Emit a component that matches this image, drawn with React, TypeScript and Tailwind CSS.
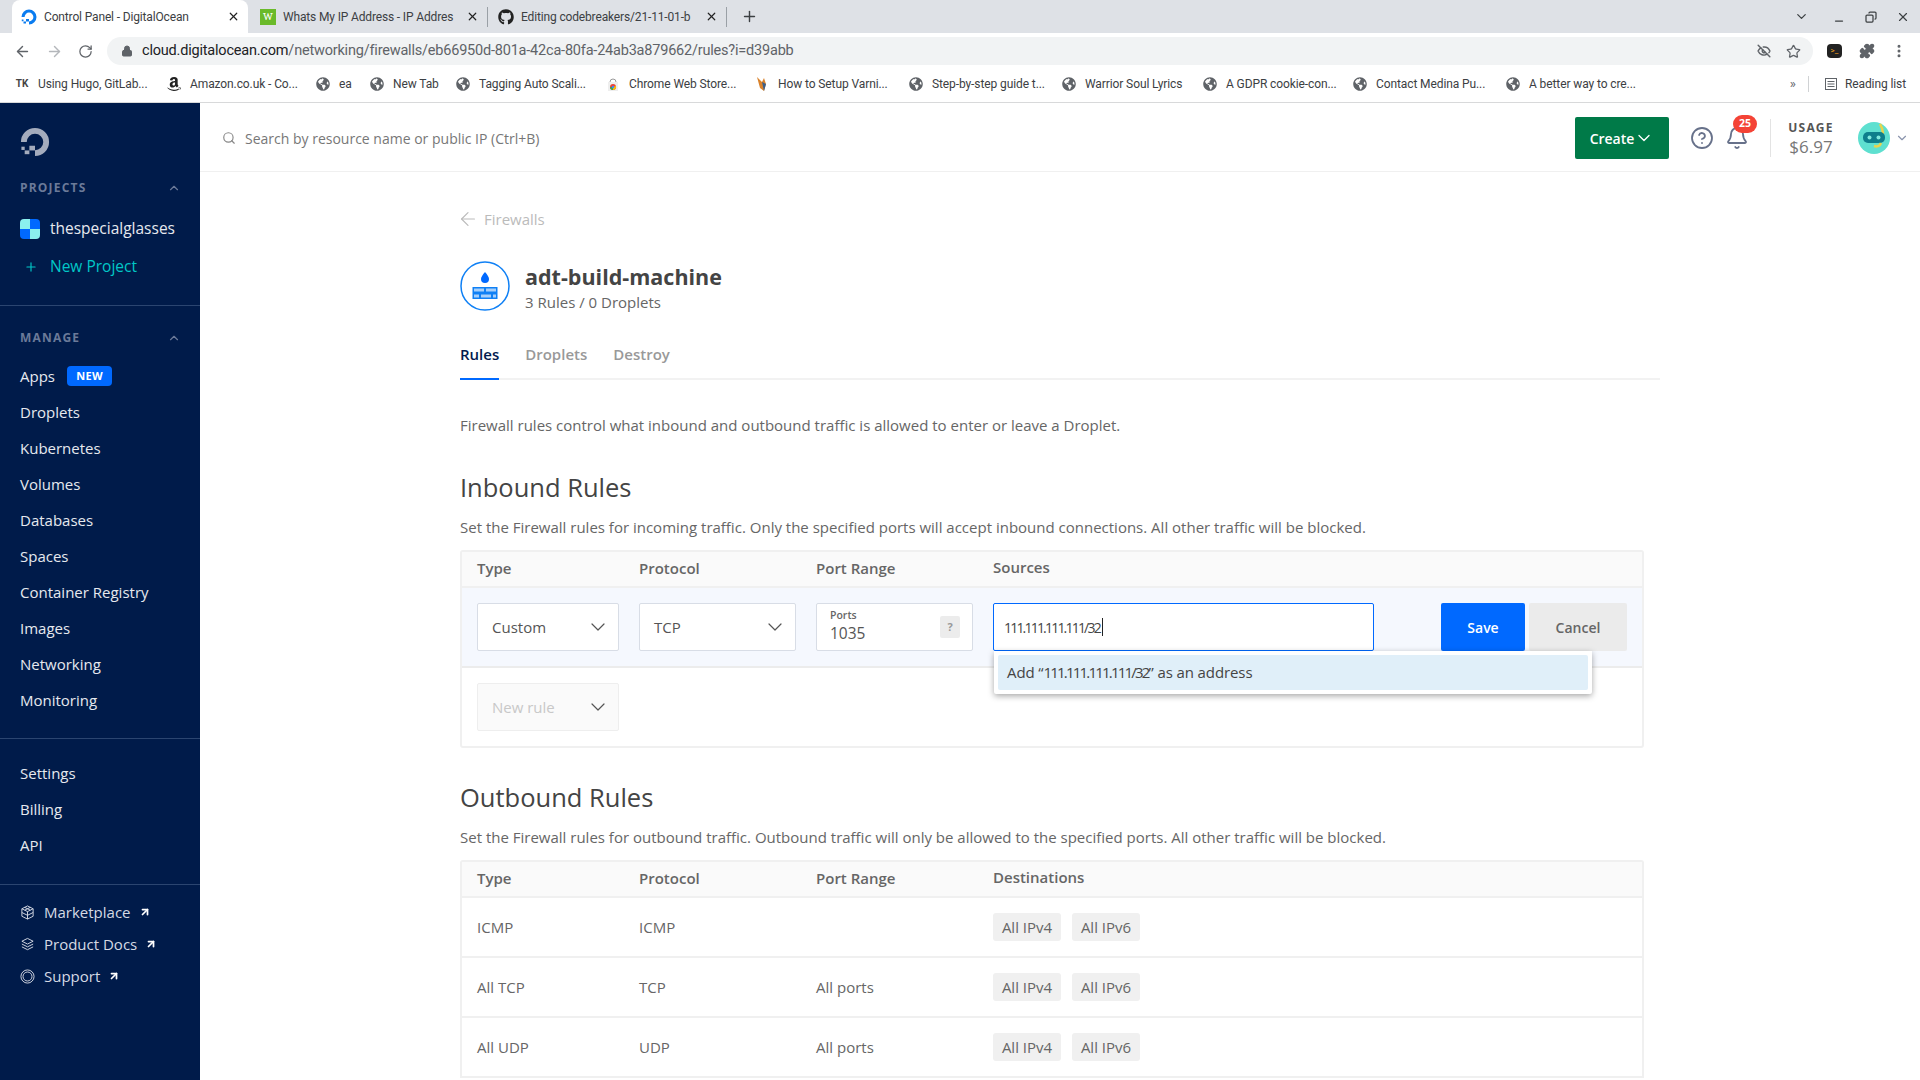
import { ArrowLeft, ArrowRight, ChevronDown, ChevronUp, EllipsisVertical, EyeOff, Lock, Plus, Puzzle, RotateCw, Search, Star, X, Minus, ArrowUpRight, CircleHelp, Bell, Copy } from "lucide-react";
import { FaGithub, FaGlobeAmericas, FaAmazon } from "react-icons/fa";

const bookmarks = [
    { label: "Using Hugo, GitLab...", icon: "tk", width: "w-[152px]" },
    { label: "Amazon.co.uk - Co...", icon: "amazon", width: "w-[149px]" },
    { label: "ea", icon: "globe", width: "w-[54px]" },
    { label: "New Tab", icon: "globe", width: "w-[86px]" },
    { label: "Tagging Auto Scali...", icon: "globe", width: "w-[150px]" },
    { label: "Chrome Web Store...", icon: "chrome", width: "w-[149px]" },
    { label: "How to Setup Varni...", icon: "fox", width: "w-[154px]" },
    { label: "Step-by-step guide t...", icon: "globe", width: "w-[153px]" },
    { label: "Warrior Soul Lyrics", icon: "globe", width: "w-[141px]" },
    { label: "A GDPR cookie-con...", icon: "globe", width: "w-[150px]" },
    { label: "Contact Medina Pu...", icon: "globe", width: "w-[153px]" },
    { label: "A better way to cre...", icon: "globe", width: "w-[140px]" },
];

const manage = ["Droplets", "Kubernetes", "Volumes", "Databases", "Spaces", "Container Registry", "Images", "Networking", "Monitoring"];

const outbound = [
    { type: "ICMP", protocol: "ICMP", ports: "" },
    { type: "All TCP", protocol: "TCP", ports: "All ports" },
    { type: "All UDP", protocol: "UDP", ports: "All ports" },
];

const DoLogo = ({ className }: { className: string }) => (
    <svg viewBox="0 0 32 32" className={className} fill="currentColor">
        <path d="M16 31v-6.2a8.8 8.8 0 1 0-8.8-8.8H1A15 15 0 1 1 16 31z" />
        <rect x="10" y="20" width="6" height="5" />
        <rect x="5" y="25" width="5" height="4" />
        <rect x="1.5" y="21" width="3.5" height="3.5" />
    </svg>
);

const BookmarkIcon = ({ icon }: { icon: string }) => {
    if (icon === "tk") return <span className="w-4 text-[10px] font-bold text-[#444] text-center">TK</span>;
    if (icon === "amazon") return <FaAmazon className="w-4 h-4 text-[#222]" />;
    if (icon === "chrome")
        return (
            <svg viewBox="0 0 16 16" className="w-4 h-4">
                <path d="M3 6h10v9H3z" fill="#eee" />
                <path d="M5 6a3 3 0 0 1 6 0" fill="none" stroke="#999" />
                <circle cx="8" cy="11" r="3" fill="#ea4335" />
                <path d="M8 11l3-1a3 3 0 0 1-3 4z" fill="#fbbc05" />
                <path d="M8 11v3a3 3 0 0 1-3-3z" fill="#34a853" />
                <circle cx="8" cy="11" r="1.2" fill="#4285f4" />
            </svg>
        );
    if (icon === "fox")
        return (
            <svg viewBox="0 0 16 16" className="w-4 h-4">
                <path d="M3 1l5 5 2-4 2 6-2 7-4-3z" fill="#d9822b" />
                <path d="M8 6l2 9 2-7z" fill="#3b5f8a" />
            </svg>
        );
    return <FaGlobeAmericas className="w-[14px] h-[14px] text-[#5f6368] mx-px" />;
};

const Tab = ({ title, icon, className }: { title: string; icon: React.ReactNode; className: string }) => (
    <div className={`flex items-center h-[33px] pr-[8px] ${className}`}>
        <span className="flex justify-center shrink-0 w-[16px]">{icon}</span>
        <span className="grow overflow-hidden whitespace-nowrap ml-[7px] text-[12px] tracking-[-0.15px] text-[#3c4043] font-[Roboto,sans-serif]">{title}</span>
        <X className="w-[13px] h-[13px] ml-1 shrink-0 text-[#222]" strokeWidth={2.2} />
    </div>
);

const Browser = () => (
    <div className="font-[Roboto,sans-serif] shrink-0">
        <div className="flex items-center h-[33px] bg-[#dee1e6] pl-[12px] pr-[10px]">
            <Tab className="w-[236px] pl-[9px] bg-white rounded-t-lg" title="Control Panel - DigitalOcean" icon={<DoLogo className="w-4 h-4 text-[#0a7cf0]" />} />
            <Tab className="w-[239px] pl-[12px]" title="Whats My IP Address - IP Addres" icon={<span className="w-4 h-4 bg-[#6aba2a] text-white text-[11px] font-serif text-center leading-4">W</span>} />
            <div className="w-px h-5 bg-[#9aa0a6]" />
            <Tab className="w-[238px] pl-[10px]" title="Editing codebreakers/21-11-01-b" icon={<FaGithub className="w-4 h-4 text-[#222]" />} />
            <div className="w-px h-5 bg-[#9aa0a6]" />
            <Plus className="w-[17px] h-[17px] ml-[14px] text-[#3c4043]" />
            <div className="grow" />
            <ChevronDown className="w-[15px] h-[15px] text-[#3c4043]" />
            <Minus className="w-[12px] h-[12px] ml-[24px] mt-2 text-[#3c4043]" strokeWidth={2.5} />
            <Copy className="w-[12px] h-[12px] ml-[20px] -scale-x-100 text-[#3c4043]" strokeWidth={2.5} />
            <X className="w-[14px] h-[14px] ml-[19px] text-[#3c4043]" />
        </div>
        <div className="flex items-center h-[34px] pt-[2px] bg-white pr-[13px]">
            <ArrowLeft className="w-[17px] h-[17px] ml-[14px] text-[#5f6368]" />
            <ArrowRight className="w-[17px] h-[17px] ml-[15px] text-[#b4b7bb]" />
            <RotateCw className="w-[15px] h-[15px] ml-[15px] text-[#5f6368]" />
            <div className="flex items-center h-[28px] ml-[14px] grow rounded-full bg-[#f1f3f4] pl-[14px] pr-[12px]">
                <Lock className="w-[12px] h-[12px] fill-[#5f6368] text-[#5f6368]" />
                <span className="ml-[9px] text-[14.5px] tracking-[-0.2px] text-[#202124]">
                    cloud.digitalocean.com<span className="text-[#5f6368]">/networking/firewalls/eb66950d-801a-42ca-80fa-24ab3a879662/rules?i=d39abb</span>
                </span>
                <div className="grow" />
                <EyeOff className="w-[14px] h-[14px] text-[#5f6368]" strokeWidth={2.5} />
                <Star className="w-[15px] h-[15px] ml-[15px] text-[#5f6368]" />
            </div>
            <div className="flex items-center justify-center w-[15px] h-[14px] ml-[14px] rounded-sm bg-[#222]">
                <span className="text-[8px] leading-none text-[#f5a623]">&gt;_</span>
            </div>
            <Puzzle className="w-[16px] h-[16px] ml-[17px] fill-[#5f6368] text-[#5f6368]" />
            <EllipsisVertical className="w-[16px] h-[16px] ml-[16px] text-[#5f6368]" strokeWidth={2.5} />
        </div>
        <div className="flex items-center h-[36px] pb-[2px] bg-white border-b border-[#d8d9da] pl-[14px] pr-[14px]">
            {bookmarks.map((b) => (
                <div key={b.label} className={`flex items-center gap-[8px] shrink-0 ${b.width}`}>
                    <BookmarkIcon icon={b.icon} />
                    <span className="whitespace-nowrap text-[12px] tracking-[-0.1px] text-[#3c4043]">{b.label}</span>
                </div>
            ))}
            <div className="grow" />
            <span className="text-[13px] text-[#5f6368] mr-[12px]">»</span>
            <div className="w-px h-[16px] bg-[#d0d2d4] mr-[15px]" />
            <svg viewBox="0 0 14 14" className="w-[14px] h-[14px] text-[#5f6368] mr-[7px]" fill="none" stroke="currentColor">
                <rect x="1.5" y="1.5" width="11" height="11" />
                <path d="M3.5 4.500h7M3.500 7h7M3.500 9.500h7" />
            </svg>
            <span className="whitespace-nowrap text-[12px] tracking-[-0.1px] text-[#3c4043]">Reading list</span>
        </div>
    </div>
);

const NavLink = ({ label }: { label: string }) => (
    <div className="h-[36px] flex items-center px-5 text-[15px] text-[#e6e9ef]">{label}</div>
);

const SectionTitle = ({ label }: { label: string }) => (
    <div className="flex items-center justify-between pl-5 pr-[19px] text-[12px] font-bold tracking-[1.2px] text-[#6b7a99]">
        {label}
        <ChevronUp className="w-[14px] h-[14px]" />
    </div>
);

const ExternalLink = ({ label, icon }: { label: string; icon: React.ReactNode }) => (
    <div className="h-[32px] flex items-center pl-5 text-[15px] text-[#d5dae4]">
        <span className="w-[24px] shrink-0">{icon}</span>
        {label}
        <ArrowUpRight className="w-[12px] h-[12px] ml-[8px] text-white" strokeWidth={3.5} />
    </div>
);

const MarketIcon = () => (
    <svg viewBox="0 0 16 16" className="w-[15px] h-[15px]" fill="none" stroke="currentColor" strokeWidth="1">
        <path d="M8 1l6 3v8l-6 3-6-3V4z" />
        <path d="M2 4l6 3 6-3M8 7v8M2 8l6 3 6-3M5 2.500l6 3M11 2.500l-6 3" />
    </svg>
);

const DocsIcon = () => (
    <svg viewBox="0 0 16 16" className="w-[15px] h-[15px]" fill="none" stroke="currentColor" strokeWidth="1">
        <path d="M8 1.500l6 3-6 3-6-3z" />
        <path d="M2 7.500l6 3 6-3M2 10.500l6 3 6-3" />
    </svg>
);

const SupportIcon = () => (
    <svg viewBox="0 0 16 16" className="w-[15px] h-[15px]" fill="none" stroke="currentColor" strokeWidth="1">
        <circle cx="8" cy="8" r="7" />
        <circle cx="8" cy="8" r="4.800" />
    </svg>
);

const Sidebar = () => (
    <aside className="w-[200px] shrink-0 bg-[#001b4a] flex flex-col">
        <div className="pl-5 pt-[24px] text-[#a4acbd]">
            <DoLogo className="w-[30px] h-[30px]" />
        </div>
        <div className="mt-[22px]"><SectionTitle label="PROJECTS" /></div>
        <div className="flex items-center h-[38px] mt-[13px] pl-5 text-[15.5px] text-[#e6e9ef]">
            <div className="grid grid-cols-2 w-[20px] h-[20px] mr-[10px] rounded-sm overflow-hidden">
                <span className="bg-[#8af0ee]" />
                <span className="bg-[#0069ff]" />
                <span className="bg-[#0069ff]" />
                <span className="bg-[#8af0ee]" />
            </div>
            thespecialglasses
        </div>
        <div className="flex items-center h-[38px] pl-[24px] text-[15.5px] text-[#00c7c7]">
            <Plus className="w-[14px] h-[14px] mr-[12px]" />
            New Project
        </div>
        <div className="mt-[19px] border-t border-[#2b4570]" />
        <div className="mt-[23px]"><SectionTitle label="MANAGE" /></div>
        <div className="h-[36px] mt-[11px] flex items-center px-5 text-[15px] text-[#e6e9ef]">
            Apps
            <span className="ml-[12px] flex items-center justify-center w-[45px] h-[20px] rounded-sm bg-[#0069ff] text-[11px] font-bold tracking-[0.3px] text-white">NEW</span>
        </div>
        {manage.map((item) => <NavLink key={item} label={item} />)}
        <div className="mt-[20px] border-t border-[#2b4570]" />
        <div className="mt-[16px]">
            {["Settings", "Billing", "API"].map((item) => <NavLink key={item} label={item} />)}
        </div>
        <div className="mt-[21px] border-t border-[#2b4570]" />
        <div className="mt-[11px]">
            <ExternalLink label="Marketplace" icon={<MarketIcon />} />
            <ExternalLink label="Product Docs" icon={<DocsIcon />} />
            <ExternalLink label="Support" icon={<SupportIcon />} />
        </div>
    </aside>
);

const Avatar = () => (
    <svg viewBox="0 0 32 32" className="w-[32px] h-[32px]">
        <circle cx="16" cy="16" r="16" fill="#5ee0d0" />
        <path d="M22 2c2 3 3 6 3 10" stroke="#e8d44d" strokeWidth="2.5" fill="none" />
        <rect x="5" y="10" width="22" height="11" rx="5" fill="#0d7f8c" />
        <circle cx="11.5" cy="15.5" r="2" fill="#7fe9dd" />
        <circle cx="20.5" cy="15.5" r="2" fill="#7fe9dd" />
        <path d="M16 24c3 1 6 0 7-3" stroke="#e8d44d" strokeWidth="2.5" fill="none" />
    </svg>
);

const TopBar = () => (
    <div className="h-[69px] pt-[2px] shrink-0 flex items-center border-b border-[#f0f0f0] pl-[22px] pr-[11px]">
        <Search className="w-[14px] h-[14px] text-[#888]" />
        <span className="ml-[9px] text-[14px] text-[#777]">Search by resource name or public IP (Ctrl+B)</span>
        <div className="grow" />
        <div className="flex items-center justify-center w-[94px] h-[42px] rounded-[2px] bg-[#007a48] text-[14px] font-semibold text-white">
            Create
            <ChevronDown className="w-[20px] h-[20px]" strokeWidth={1.6} />
        </div>
        <CircleHelp className="w-[24px] h-[24px] ml-[21px] text-[#67718a]" strokeWidth={1.8} />
        <div className="relative ml-[11px]">
            <Bell className="w-[24px] h-[24px] text-[#67718a]" strokeWidth={1.8} />
            <span className="absolute -top-[11px] left-[8px] flex items-center justify-center w-[24px] h-[18px] rounded-full bg-[#f44336] text-[10.5px] font-bold text-white">25</span>
        </div>
        <div className="w-px h-[38px] ml-[21px] bg-[#e3e3e3]" />
        <div className="w-[78px] ml-[1px] -mt-[2px] text-center">
            <div className="text-[12px] font-bold tracking-[1.2px] text-[#555]">USAGE</div>
            <div className="text-[17px] leading-[19px] text-[#777]">$6.97</div>
        </div>
        <div className="ml-[8px]"><Avatar /></div>
        <ChevronDown className="w-[14px] h-[14px] ml-[5px] text-[#8a94ad]" />
    </div>
);

const Select = ({ label, width, disabled }: { label: string; width: string; disabled?: boolean }) => (
    <div className={`flex items-center justify-between h-[48px] pl-[14px] pr-[8px] rounded-[2px] border ${width} ${disabled ? "border-[#eeeeee] bg-[#fafafa] text-[#c8c8c8]" : "border-[#d8dde6] bg-white text-[#555]"}`}>
        <span className="text-[15px]">{label}</span>
        <ChevronDown className="w-[24px] h-[24px] text-[#555]" strokeWidth={1.2} />
    </div>
);

const HeaderRow = ({ last }: { last: string }) => (
    <div className="flex items-center h-[36px] bg-[#fafafa] border-b-2 border-[#f0f0f0] pl-[15px] text-[15px] font-semibold text-[#666]">
        <span className="w-[162px] -mt-[2px]">Type</span>
        <span className="w-[177px] -mt-[2px]">Protocol</span>
        <span className="w-[177px] -mt-[2px]">Port Range</span>
        <span className="-mt-[3px]">{last}</span>
    </div>
);

const InboundTable = () => (
    <div className="relative rounded-[3px] border-2 border-[#f0f0f0]">
        <HeaderRow last="Sources" />
        <div className="flex items-center h-[80px] bg-[#f5f8fe] border-b-2 border-[#ececec] pl-[15px]">
            <Select label="Custom" width="w-[142px] mr-[20px]" />
            <Select label="TCP" width="w-[157px] mr-[20px]" />
            <div className="flex items-center justify-between w-[157px] h-[48px] mr-[20px] pl-[13px] pr-[12px] rounded-[2px] border border-[#d8dde6] bg-white">
                <div className="pb-[3px]">
                    <div className="mb-[3px] text-[10.5px] leading-[12px] font-semibold text-[#666]">Ports</div>
                    <div className="text-[15.5px] leading-[18px] text-[#555]">1035</div>
                </div>
                <span className="flex items-center justify-center w-[20px] h-[22px] rounded-[2px] bg-[#ececec] text-[11px] font-bold text-[#999]">?</span>
            </div>
            <div className="flex items-center w-[381px] h-[48px] pl-[10px] rounded-[2px] border border-[#0069ff] bg-white text-[14px] tracking-[-1.8px] text-[#444]">
                111.111.111.111/32
                <span className="w-px h-[18px] ml-[2px] bg-[#222]" />
            </div>
            <div className="flex items-center justify-center w-[84px] h-[48px] ml-[67px] rounded-[2px] bg-[#0069ff] text-[14px] font-semibold text-white">Save</div>
            <div className="flex items-center justify-center w-[98px] h-[48px] ml-[4px] rounded-[2px] bg-[#ebebeb] text-[14px] font-semibold text-[#666]">Cancel</div>
        </div>
        <div className="h-[78px] pl-[15px] pt-[15px]">
            <Select label="New rule" width="w-[142px]" disabled />
        </div>
        <div className="absolute left-[532px] top-[99px] w-[598px] h-[43px] p-[4px] bg-white rounded-b-[2px] shadow-[0_2px_6px_rgba(0,0,0,0.35)]">
            <div className="flex items-center h-full pl-[9px] rounded-[2px] bg-[#e0eff9] text-[15px] tracking-[-0.1px] text-[#444]">
                Add “<span className="tracking-[-1.8px]">111.111.111.111/32</span>” as an address
            </div>
        </div>
    </div>
);

const OutboundTable = () => (
    <div className="rounded-t-[3px] border-x-2 border-t-2 border-[#f0f0f0]">
        <HeaderRow last="Destinations" />
        {outbound.map((row) => (
            <div key={row.type} className="flex items-center h-[60px] border-b-2 border-[#f0f0f0] pl-[15px] text-[15px] text-[#666]">
                <span className="w-[162px]">{row.type}</span>
                <span className="w-[177px]">{row.protocol}</span>
                <span className="w-[177px]">{row.ports}</span>
                <span className="flex items-center justify-center w-[68px] h-[28px] mr-[11px] rounded-[3px] bg-[#f0f0f0]">All IPv4</span>
                <span className="flex items-center justify-center w-[68px] h-[28px] rounded-[3px] bg-[#f0f0f0]">All IPv6</span>
            </div>
        ))}
    </div>
);

const Content = () => (
    <div className="w-[1200px] ml-[260px] pt-[37px]">
        <div className="flex items-center h-[20px] text-[15px] text-[#bbbbbb]">
            <ArrowLeft className="w-[22px] h-[22px] -ml-[3px] mr-[5px]" strokeWidth={1.3} />
            Firewalls
        </div>
        <div className="flex items-center mt-[32px] h-[50px]">
            <svg viewBox="0 0 50 50" className="w-[50px] h-[50px]" fill="none">
                <circle cx="25" cy="25" r="24" stroke="#0f80f5" strokeWidth="1.5" />
                <path d="M25 11c2.500 3 4 5 4 7a4 4 0 0 1-8 0c0-2 1.500-4 4-7z" fill="#0069ff" />
                <rect x="12.5" y="26" width="25" height="12" fill="#0f80f5" />
                <path d="M14 27.500h10v3H14zM26 27.500h10v3H26zM14 33.500h5v3h-5zM21 33.500h10v3H21zM33 33.500h3v3h-3z" fill="#a6cffb" />
            </svg>
            <div className="ml-[15px] mt-[2px]">
                <div className="text-[21.5px] leading-[29px] font-bold text-[#444]">adt-build-machine</div>
                <div className="text-[15px] leading-[22px] text-[#666]">3 Rules / 0 Droplets</div>
            </div>
        </div>
        <div className="flex h-[70px] items-end border-b-2 border-[#f2f2f2] mt-[-1px] text-[15px] leading-[22px] font-semibold text-[#999]">
            <span className="pb-[13px] -mb-[2px] border-b-2 border-[#0069ff] text-[#031b4e]">Rules</span>
            <span className="pb-[13px] ml-[26px]">Droplets</span>
            <span className="pb-[13px] ml-[26px]">Destroy</span>
        </div>
        <p className="mt-[34px] text-[15px] leading-[22px] text-[#666]">Firewall rules control what inbound and outbound traffic is allowed to enter or leave a Droplet.</p>
        <h2 className="mt-[33px] text-[25.5px] leading-[36px] text-[#444]">Inbound Rules</h2>
        <p className="mt-[11px] text-[15px] leading-[22px] text-[#666]">Set the Firewall rules for incoming traffic. Only the specified ports will accept inbound connections. All other traffic will be blocked.</p>
        <div className="mt-[12px] w-[1184px]"><InboundTable /></div>
        <h2 className="mt-[31px] text-[25.5px] leading-[36px] text-[#444]">Outbound Rules</h2>
        <p className="mt-[11px] text-[15px] leading-[22px] text-[#666]">Set the Firewall rules for outbound traffic. Outbound traffic will only be allowed to the specified ports. All other traffic will be blocked.</p>
        <div className="mt-[12px] w-[1184px]"><OutboundTable /></div>
    </div>
);

export default function App() {
    return (
        <div className="w-[1920px] h-[1080px] flex flex-col overflow-hidden bg-white font-['Open_Sans',sans-serif]">
            <Browser />
            <div className="flex grow min-h-0">
                <Sidebar />
                <main className="grow flex flex-col min-w-0 overflow-hidden">
                    <TopBar />
                    <Content />
                </main>
            </div>
        </div>
    );
}
